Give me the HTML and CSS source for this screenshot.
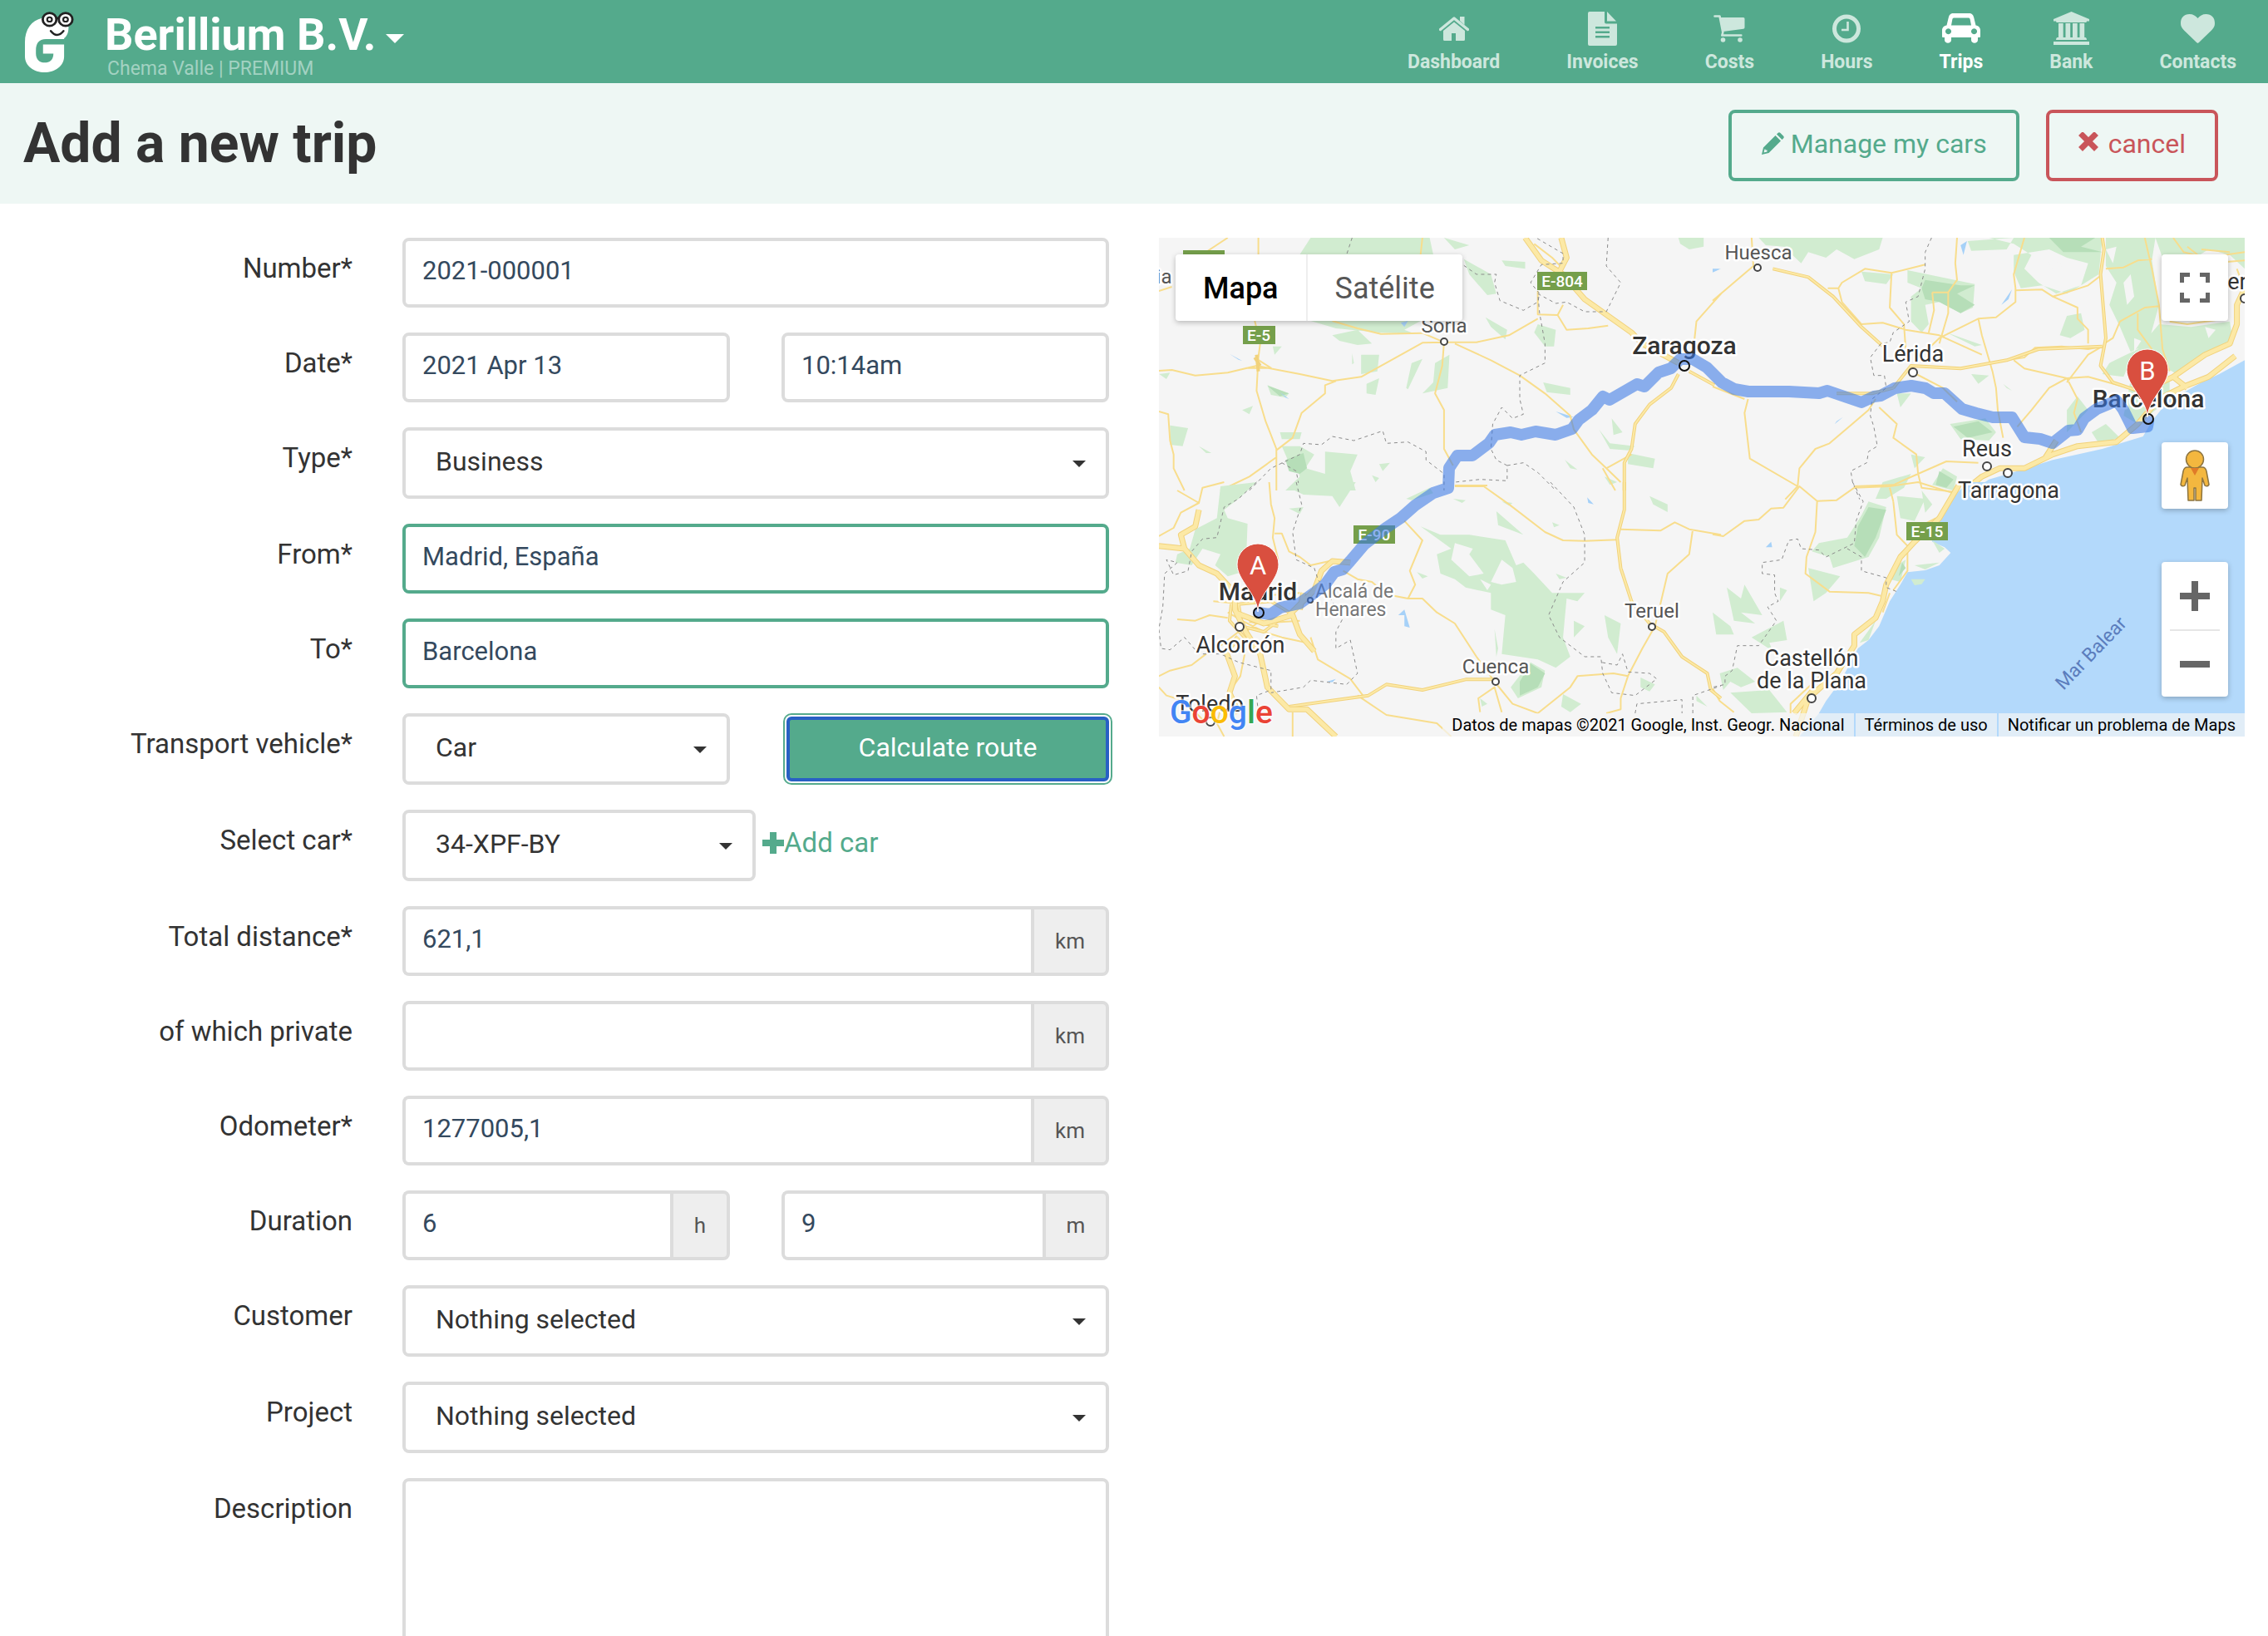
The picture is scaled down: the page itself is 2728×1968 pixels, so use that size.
FILE: index.html
```html
<!DOCTYPE html>
<html lang="en">
<head>
<meta charset="utf-8">
<meta name="viewport" content="width=device-width, initial-scale=1">
<title>Add a new trip</title>
<link rel="stylesheet" href="styles.css">
</head>
<body>
<header class="topbar">
  <a class="logo" href="#" aria-label="Home">
    <svg width="62" height="76" viewBox="28 12 62 76">
      <g transform="scale(.357 .339)">
        <path fill="#fff" d="M142 64C106 72 84 104 84 150V200C84 235 115 257 150 257S216 235 216 200V136C226 128 231 115 231 95V60z"/>
        <path fill="#54aa8c" d="M218 139H155C130 139 121 155 121 180V190C121 212 135 222 150 222 168 222 180 212 180 190H145V158H218z"/>
        <path fill="none" stroke="#222" stroke-width="7" stroke-linecap="round" d="M171 110Q192 138 214 110M188 66q6-4 12 0"/>
        <circle cx="167" cy="69" r="23" fill="#fff" stroke="#222" stroke-width="8"/>
        <circle cx="221" cy="69" r="23" fill="#fff" stroke="#222" stroke-width="8"/>
        <circle cx="167" cy="69" r="8" fill="none" stroke="#222" stroke-width="6"/>
        <circle cx="221" cy="69" r="8" fill="none" stroke="#222" stroke-width="6"/>
      </g>
    </svg>
  </a>
  <div class="account">
    <button class="company" type="button">Berillium B.V.<span class="company-caret"></span></button>
    <span class="user">Chema Valle | PREMIUM</span>
  </div>
  <nav class="mainnav">
    <a class="navlink" href="#"><span class="navicon"><svg width="36" height="29" viewBox="0 0 36 29"><path d="M1.500 15.500 18 2l16.500 13.500" fill="none" stroke="currentColor" stroke-width="3.500" stroke-linecap="round" stroke-linejoin="round"/><path d="M25 0h5.500v10L25 5zM5 17 18 6.500 31 17v10.500q0 1.500-1.500 1.500H20v-9h-5v9H6.500Q5 29 5 27.500z"/></svg></span>Dashboard</a>
    <a class="navlink" href="#"><span class="navicon"><svg width="35" height="41" viewBox="0 0 35 41"><path fill-rule="evenodd" d="M2 0h18v12.500q0 2 2 2h13V39q0 2-2 2H2q-2 0-2-2V2q0-2 2-2zM9 18v2.500h17V18zm0 5.500V26h17v-2.500zM9 29v2.500h17V29zM23 0l11 11.500H23z"/></svg></span>Invoices</a>
    <a class="navlink" href="#"><span class="navicon"><svg width="38" height="33" viewBox="0 0 38 33"><path fill="none" stroke="currentColor" stroke-width="2.600" stroke-linecap="round" stroke-linejoin="round" d="M1.500 1.500h6l3.800 19.500-1 3.500h23"/><path d="M8.500 3H36q1.500 0 1.500 1.500V15q0 1.500-1.500 1.700L11.500 20z"/><circle cx="11.500" cy="30" r="2.800"/><circle cx="32" cy="30" r="2.800"/></svg></span>Costs</a>
    <a class="navlink" href="#"><span class="navicon"><svg width="34" height="35" viewBox="0 0 34 35"><g fill="none" stroke="currentColor"><circle cx="17" cy="17.500" r="14.500" stroke-width="5"/><path d="M18.500 9v10h-7.500" stroke-width="2.600"/></g></svg></span>Hours</a>
    <a class="navlink navlink-active" href="#"><span class="navicon"><svg width="46" height="36" viewBox="0 0 46 36"><path fill-rule="evenodd" d="M14 0h18c4 0 5.500 2 6.200 5l2.300 9.500c3.500.5 5.500 3 5.500 6V28q0 1-1 1h-2v3c0 5-8 5-8 0v-3H11v3c0 5-8 5-8 0v-3H1q-1 0-1-1v-7.500c0-3 2-5.500 5.500-6L7.800 5C8.500 2 10 0 14 0zm0 5.500q-1.300 0-1.600 1.500L11 14.500h24L33.600 7q-.3-1.500-1.600-1.500zM7.500 18.200a3.500 3.500 0 1 0 .01 0zm31 0a3.500 3.500 0 1 0 .01 0z"/></svg></span>Trips</a>
    <a class="navlink" href="#"><span class="navicon"><svg width="43" height="40" viewBox="0 0 43 40"><path d="M21.500 0 43 9v2.500h-3q0 1.500-1.500 1.500h-34Q3 13 3 11.500H0V9zM6 14h5.700v17H6zm8.500 0h5.700v17h-5.700zm8.500 0h5.700v17H23zm8.500 0h5.700v17h-5.700zM4.500 31h34q1.500.5 1.500 3H3q0-2.500 1.500-3zM0 36h43v4H0z"/></svg></span>Bank</a>
    <a class="navlink" href="#"><span class="navicon"><svg width="41" height="35" viewBox="0 0 41 35"><path d="M20.500 35Q19 34 17.500 32.500L4 19.500C1 16.500 0 14 0 11 0 4 4 0 10.500 0 15 0 18 2 20.500 5 23 2 26 0 30.500 0 37 0 41 4 41 11c0 3-1 5.500-4 8.500l-13.500 13Q22 34 20.500 35z"/></svg></span>Contacts</a>
  </nav>
</header>

<section class="pagehead">
  <h1 class="title">Add a new trip</h1>
  <div class="actions">
    <button class="btn btn-green" type="button"><svg width="28" height="28" viewBox="0 0 28 28"><path fill-rule="evenodd" d="M1 27l2-8.500L17.500 4l6.500 6.500L9.500 25zM19 2.500l1.500-1.500q1.500-1.500 3 0l3.500 3.500q1.500 1.500 0 3L25.500 9zM4.500 20.500l-1 4 4-1v-2h-2v-1z"/></svg>Manage my cars</button>
    <button class="btn btn-red" type="button"><svg width="24" height="28" viewBox="0 0 24 28"><path d="M5 4l14 14M19 4L5 18" fill="none" stroke="currentColor" stroke-width="7" stroke-linecap="square"/></svg>cancel</button>
  </div>
</section>

<main class="content">
  <form class="form">
    <div class="row"><label class="label" for="number">Number*</label>
      <input class="input" id="number" type="text" value="2021-000001"></div>
    <div class="row"><label class="label" for="date">Date*</label>
      <div class="pair"><input class="input" id="date" type="text" value="2021 Apr 13"><input class="input" type="text" value="10:14am" aria-label="Time"></div></div>
    <div class="row"><label class="label" for="type">Type*</label>
      <div class="select"><select id="type"><option>Business</option></select></div></div>
    <div class="row"><label class="label" for="from">From*</label>
      <input class="input input-valid" id="from" type="text" value="Madrid, España"></div>
    <div class="row"><label class="label" for="to">To*</label>
      <input class="input input-valid" id="to" type="text" value="Barcelona"></div>
    <div class="row"><label class="label" for="vehicle">Transport vehicle*</label>
      <div class="pair"><div class="select"><select id="vehicle"><option>Car</option></select></div><button class="calc" type="button">Calculate route</button></div></div>
    <div class="row"><label class="label" for="car">Select car*</label>
      <div class="carline"><div class="select"><select id="car"><option>34-XPF-BY</option></select></div><a class="addcar" href="#"><svg width="26" height="26" viewBox="0 0 26 26"><path d="M13 0v26M0 13h26" stroke="currentColor" stroke-width="8"/></svg>Add car</a></div></div>
    <div class="row"><label class="label" for="total">Total distance*</label>
      <div class="group"><input class="input" id="total" type="text" value="621,1"><span class="addon addon-km">km</span></div></div>
    <div class="row"><label class="label" for="private">of which private</label>
      <div class="group"><input class="input" id="private" type="text" value=""><span class="addon addon-km">km</span></div></div>
    <div class="row"><label class="label" for="odometer">Odometer*</label>
      <div class="group"><input class="input" id="odometer" type="text" value="1277005,1"><span class="addon addon-km">km</span></div></div>
    <div class="row"><label class="label" for="hours">Duration</label>
      <div class="pair"><div class="group"><input class="input" id="hours" type="text" value="6"><span class="addon">h</span></div><div class="group"><input class="input" type="text" value="9" aria-label="Minutes"><span class="addon addon-m">m</span></div></div></div>
    <div class="row"><label class="label" for="customer">Customer</label>
      <div class="select"><select id="customer"><option>Nothing selected</option></select></div></div>
    <div class="row"><label class="label" for="project">Project</label>
      <div class="select"><select id="project"><option>Nothing selected</option></select></div></div>
    <div class="row"><label class="label" for="description">Description</label>
      <textarea class="input textarea" id="description"></textarea></div>
  </form>

  <section class="map" aria-label="Route map">
    <svg class="mapcanvas" viewBox="0 0 1306 600" preserveAspectRatio="xMidYMid slice">
      <rect width="1306" height="600" fill="#f5f5f5"/>
      <!-- north-east tile -->
      <g class="tile" transform="translate(666 -6) scale(.42608 .33333)">
        <path class="sea" d="M1502 460 1430 510 1380 540 1325 580 1290 600 1240 680 1215 735 1100 780 960 820 860 860 780 890 745 920 715 962H1504z"/>
        <path class="wood" d="M130 18H480L470 60 400 95 350 60 320 90 270 70 250 110 200 50 150 45zM550 135 740 185 735 270 700 290 640 250 600 260 610 330 590 360 560 320 560 230 590 200 550 180zM640 18H780L850 40 900 80 880 130 920 180 970 220 1040 190 1090 150 1100 18H640zM720 30 850 18 830 60 730 65zM850 80 950 60 1000 90 1060 110 1040 190 1000 220 930 190 870 200 850 140zM1110 18H1250L1240 100 1260 260 1230 400 1180 430 1150 340 1120 260 1140 180 1110 120zM1250 18H1502V130L1460 80 1400 60 1350 100 1270 90zM1260 330 1350 340 1460 320 1470 400 1400 430 1310 510 1270 480 1220 510 1180 460 1160 520 1100 510 1120 470 1200 420zM1000 300 1040 290 1050 350 1010 380 980 370zM670 690 770 670 800 720 780 750 700 745zM520 580 560 580 530 630zM1000 640 1030 590 1060 640 1000 720zM1070 720 1110 690 1150 740 1090 760zM480 900 560 870 540 920 490 960H460zM560 800 600 810 570 850zM650 850 690 880 680 930 620 910zM730 510 780 515 750 545zM820 545 845 570 830 560zM420 140 510 150 490 185 430 175zM660 360 760 405 740 410zM1180 530 1290 520 1290 600 1200 690 1160 660 1170 600z"/>
        <path class="dark" d="M600 170 700 190 740 190 690 220 740 260 700 290 640 250 600 240 590 200zM950 18H1080L1040 50 1100 70 990 70zM680 700 750 680 790 720 720 740zM640 860 680 890 660 920 630 910z"/>
        <path class="land" d="M940 90 980 110 1000 150 960 130zM1160 180 1180 150 1190 230 1170 260zM1110 60 1140 50 1130 110zM1190 380 1210 390 1190 430zM1390 340 1420 350 1400 380z"/>
        <path class="water" d="M815 260 845 205 835 240zM700 45 718 30 708 80zM345 690 368 665 350 680zM0 130 20 130 0 142z"/>
        <path class="road" d="M110 18 115 120 0 245M325 200 355 200 365 180 430 130 505 145 600 115M505 145 500 270 540 330 545 420M355 200 365 250 420 330 480 325 545 350 640 370 760 440M620 215 625 280 610 360M665 215 665 290 640 400M690 18 685 110 690 170 665 215 620 215M880 18 850 150 855 200 855 250 800 305 750 310 640 380 600 430M855 208 930 205 960 230 1000 215 1060 190 1095 155M960 230 1030 270 1030 310 1060 350 1060 400M750 310 760 370 790 500 800 560 805 640 820 740M1110 130 1160 125 1200 100 1240 95M1220 18 1240 130 1260 260 1270 420 1290 500M1105 400 1130 380 1150 320 1220 270 1260 265M1200 290 1200 350 1240 420M1100 410 1060 420 985 410 910 415 880 450 830 460M850 460 880 490 1000 525 1060 520 1160 555M1000 525 1030 600 1020 650 1040 720M1000 525 950 560 900 640 860 700M1000 540 1060 440 1100 410M575 510 650 560 690 610M100 600 90 650 105 815 240 915 205 962M240 915 245 850 290 780 330 760 440 640 460 600M400 915 510 910 580 870 660 825 750 830M580 870 575 800 510 740 520 690 470 630M580 870 590 920 680 935M1340 50 1400 110 1502 100M1300 18 1330 70 1390 90 1502 70M1290 320 1340 330 1450 310M1480 130 1500 200M0 555 90 600M1380 60 1460 70"/>
        <path class="edge mid" d="M170 130 270 160 340 230 420 340 490 420M510 560 560 480 700 490 830 460 920 420 1100 410M1100 18 1105 60 1095 150 1110 380 1095 480 1130 540 1200 570M350 580 450 580 510 560"/>
        <path class="fillroad mid" d="M170 130 270 160 340 230 420 340 490 420M510 560 560 480 700 490 830 460 920 420 1100 410M1100 18 1105 60 1095 150 1110 380 1095 480 1130 540 1200 570M350 580 450 580 510 560"/>
        <path class="edge big" d="M680 962 760 880 810 850 880 850 960 800 1030 770 1140 755 1200 690 1260 600 1330 555 1400 520 1440 480 1475 445M940 810 970 750M1200 580 1300 520 1390 440 1460 400 1480 330 1480 260 1502 200M1300 520 1340 560"/>
        <path class="fillroad big" d="M680 962 760 880 810 850 880 850 960 800 1030 770 1140 755 1200 690 1260 600 1330 555 1400 520 1440 480 1475 445M940 810 970 750M1200 580 1300 520 1390 440 1460 400 1480 330 1480 260 1502 200M1300 520 1340 560"/>
        <path class="border" d="M618 18 600 70 600 130 580 230 545 250 555 320 510 360 500 395 475 400 445 450 455 515 485 515 490 560 450 600 445 660 455 700 465 770 440 790 435 830 390 860 395 900 415 962"/>
      </g>
      <!-- south-east tile -->
      <g class="tile" transform="translate(666 294) scale(.42608 .33333)">
        <path class="sea" d="M720 0 690 40 640 130 610 180 620 215 655 235 672 255 640 300 600 318 550 325 530 370 500 430 470 520 440 570 410 600 390 650 360 720 320 790 300 834 245 918H1504V0z"/>
        <path class="wood" d="M440 70 490 90 470 200 440 270 340 310 330 270 280 250 300 220 380 200 420 120zM270 310 360 340 320 400 285 430zM520 50 600 60 570 140 530 130zM590 30 620 80 600 110zM40 380 80 420 90 370 140 480 80 470 120 510 60 500zM0 470 50 520 60 550 10 550zM110 560 200 500 210 570 160 580 170 610zM20 690 70 670 120 720 80 740 50 720 30 750zM50 760 160 750 210 830 110 834zM520 300 545 280 530 360 500 350zM570 300 640 290 600 315zM560 350 600 350 590 368 570 372zM620 210 655 240 640 255zM460 500 440 570 415 580zM190 380 210 390 190 430z"/>
        <path class="dark" d="M440 90 490 100 460 200 430 270 400 230 410 160zM535 290 545 310 525 340z"/>
        <path class="water" d="M150 235 165 215 168 235z"/>
        <path class="road" d="M0 188 30 195 90 140 130 135 165 95 200 92 245 15 295 68 290 180 265 270 262 330 330 395 440 400 475 410M295 68 350 65 400 20 500 15 580 0 680 40M510 70 500 20M510 70 520 190 550 230M550 250 550 320 510 390M500 400 480 470M0 745 20 790 60 830M600 150 630 130M220 834 220 800 320 680"/>
        <path class="edge big" d="M700 0 640 130 570 215 530 270 490 370 480 430 460 490 400 550 400 590 350 690 270 780 235 918M290 740 230 834"/>
        <path class="fillroad big" d="M700 0 640 130 570 215 530 270 490 370 480 430 460 490 400 550 400 590 350 690 270 780 235 918M290 740 230 834"/>
        <path class="border" d="M395 0 425 70 405 140 400 220 320 270 300 245 250 240 240 205 215 210 195 280 140 290 140 330 175 335 175 400 185 430 155 450 180 500 130 590 70 590 55 680 35 700 35 730 0 740M380 240 420 270 420 320 490 345 490 380 520 395"/>
      </g>
      <!-- north-west tile -->
      <g class="tile" transform="translate(-4 -6) scale(.43367 .33333)">
        <path class="wood" d="M430 18H760L770 78H400zM430 318H735L690 350 720 365 620 360 500 345zM490 370 560 350 600 400 560 405 510 390zM570 440 620 440 615 500 570 510zM585 545 620 525 610 585 585 580zM710 470 740 455 700 565 695 560zM775 470 815 440 810 560 740 580 770 540zM800 18 870 45 830 60zM1450 18H1520L1520 50 1480 60 1455 40zM855 95 930 150 945 220 920 225 870 150zM960 100 1025 105 1025 130 970 120zM915 305 975 350 970 385 930 340zM1060 330 1110 350 1105 410 1080 410 1050 360zM1075 540 1150 560 1150 585 1085 575zM40 695 90 705 75 770 40 765zM120 770 155 795 140 795zM240 640 270 625 260 655zM310 550 370 580 360 595 320 585zM470 790 560 800 540 860 555 930H360L400 880 390 840 470 870zM345 720 405 720 400 745 350 745zM350 770 400 770 440 800 410 860 370 830zM620 835 650 830 630 860zM600 875 620 885 610 900zM1265 670 1295 720 1270 730zM1230 710 1260 760 1330 770 1310 785 1260 780zM1310 795 1385 815 1380 850 1310 835zM1135 820 1170 855 1150 850zM1245 880 1280 900 1260 910zM325 410 350 410 330 440zM10 510 40 505 30 528zM545 435 550 470 545 475z"/>
        <path class="dark" d="M360 820 410 795 420 850 400 870 370 860zM310 552 370 580 345 590z"/>
        <path class="water" d="M205 437 240 462 230 458zM680 325 700 318 690 340zM1110 645 1160 665 1140 668zM345 575 370 600 360 595zM1545 135 1568 130 1545 143z"/>
        <path class="road" d="M9 210 45 195M200 18 130 78M285 18V78M740 18 735 78M275 318 290 400 285 450 280 570 305 680 335 780 335 930M9 498 45 495 110 515 200 505 280 480 400 510 490 535 570 520 740 397 800 395 890 395 980 370 1060 310M250 488H320L280 455M490 318 560 345 625 365 740 362 800 395M830 400 930 460 1010 515 1080 580 1150 660 1160 710 1210 800 1250 850 1290 900M800 395 795 480 775 580 800 640 800 780 825 840M9 645 35 655 40 750 50 800 50 850 80 930M500 535 470 550 470 580 405 650 380 740 335 785M335 810 260 880 180 930M1060 210 1060 295 1115 297 1140 350 1200 345 1255 335M1115 297 1130 260M1568 220 1500 320 1490 440M1050 40 1100 90 1130 130M1320 800 1250 850M1240 850 1275 930M830 912H920"/>
        <path class="edge mid" d="M1450 510 1430 560 1370 620 1330 690 1320 780 1300 830 1300 930M1480 500 1550 550M280 440 285 500M275 450 290 480"/>
        <path class="fillroad mid" d="M1450 510 1430 560 1370 620 1330 690 1320 780 1300 830 1300 930M1480 500 1550 550"/>
        <path class="edge big" d="M1025 18 1070 100 1130 150 1190 240 1320 360 1350 400 1450 470M1125 18 1140 90 1120 140"/>
        <path class="fillroad big" d="M1025 18 1070 100 1130 150 1190 240 1320 360 1350 400 1450 470M1125 18 1140 90 1120 140"/>
        <path class="border" d="M545 18 530 78M855 118 890 150 945 150 940 180 955 245 1020 280 1060 250 1065 220 1040 180 1070 115 1130 110 1130 75 1055 18M1255 18 1250 120 1290 180 1250 285 1190 285 1140 250 1110 255 1060 220 1065 290 1080 400 1080 470 1010 515 1010 600 1020 655 990 670 960 630 935 690 930 780 945 820 975 840 975 895 900 890 830 900M975 840 1020 830 1060 865 1110 930M260 930 320 850 400 800 410 760 460 765 490 735 550 750 630 715 640 760 700 755 750 790 750 820 800 870 800 930M350 830 390 860 400 930"/>
      </g>
      <!-- south-west tile -->
      <g class="tile" transform="translate(-4 294) scale(.43367 .33333)">
        <path class="wood" d="M180 15 280 0 230 60 190 100 200 130 255 150 250 320 200 340 165 300 180 260 130 240 100 300 55 290 60 260 95 240 110 170 170 130zM370 20 400 0H555L510 90 490 50 410 45zM370 95 410 90 400 115zM695 60 760 20 770 40 710 65zM825 60 860 65 850 75zM945 105 1020 190 950 155zM735 160 790 190 870 190 970 210 1000 300 1020 290 1050 330 1100 400 1190 400 1170 430 1140 420 1130 560 1150 630 1110 670 1060 640 960 620 970 480 930 460 930 400 860 380 830 350 790 330 780 260 820 240zM725 325 755 340 740 348zM1000 715 1040 650 1080 680 1070 740 1005 780 985 740zM1245 480 1290 510 1280 620 1255 560zM1160 500 1190 520 1160 560zM1370 50 1420 80 1420 108 1380 80zM1345 705 1385 730 1370 755 1345 740zM1130 765 1180 800 1150 830 1125 810zM900 780 920 800 905 810zM940 530 950 600 945 630zM960 70 990 75 980 85zM1100 145 1120 155 1105 163zM1500 770 1530 810 1500 790zM1530 510 1535 560zM1110 330 1140 345 1120 350z"/>
        <path class="land" d="M830 220 880 240 870 260 910 330 870 340 820 280zM960 280 990 310 1000 360 960 370 930 360zM900 350 930 370 920 390z"/>
        <path class="dark" d="M1040 655 1080 690 1060 740 1010 770 1010 720z"/>
        <path class="water" d="M673 480 690 460 705 525 690 520 690 480zM1197 55 1215 80 1200 75zM475 720 500 710 490 722z"/>
        <path class="road" d="M9 195 50 165 70 110 120 75 130 20 190 0M120 75 60 30M315 0 320 80 330 130 325 200 340 280M330 185 350 185 370 250 400 270 430 300 500 280M690 140 740 210 705 320 720 370 700 420 640 405 600 360 560 350 520 320M700 420 740 420 780 470 830 510 890 630 940 720M830 15H910L980 80 1080 180 1130 210 1190 212 1280 208M1290 170 1400 175 1440 145 1480 170 1568 190M1490 170 1480 260 1420 330 1400 440 1385 520 1350 600 1310 700 1290 780 1290 820 1250 834M60 495 110 500 150 480 200 490M160 430 250 440 300 410 400 400M9 700 40 680 100 660 140 620 180 590 230 540M9 740 30 770 80 790 140 870M430 560 450 640 540 710 575 770M940 720 990 800 1060 834 1150 740 1170 700 1270 690 1310 700M900 830 895 780 940 740 960 830M1250 834 1290 820M560 770 640 840 780 870 820 918M250 600 235 700 180 800M380 830 380 918M200 470 240 500 300 540 350 560 420 580M180 820 170 870 190 918M250 540 280 510 400 500"/>
        <path class="edge mid" d="M940 712 860 712 740 750 640 730 590 770 480 790 370 810M1300 0 1300 100 1280 200 1290 310 1320 430 1370 510 1410 540 1460 630 1530 690 1540 750 1568 780M210 440 205 500 260 580M350 490 300 540 240 520 230 440 320 430 370 470M260 500 340 520"/>
        <path class="fillroad mid" d="M940 712 860 712 740 750 640 730 590 770 480 790 370 810M1300 0 1300 100 1280 200 1290 310 1320 430 1370 510 1410 540 1460 630 1530 690 1540 750 1568 780M210 440 205 500 260 580M350 490 300 540 240 520 230 440 320 430 370 470M260 500 340 520"/>
        <path class="edge big" d="M9 230 80 240 70 190 110 160 120 100M80 240 120 300 170 330 220 400 220 460 250 540 290 620 310 740 370 820 420 820 500 918M230 560 195 610 220 700 205 760 230 834M220 470 300 510 380 480 400 550 440 610M370 480 440 390 460 320 490 285 540 290M400 460 410 400"/>
        <path class="fillroad big" d="M9 230 80 240 70 190 110 160 120 100M80 240 120 300 170 330 220 400 220 460 250 540 290 620 310 740 370 820 420 820 500 918M230 560 195 610 220 700 205 760 230 834M220 470 300 510 380 480 400 550 440 610M370 480 440 390 460 320 490 285 540 290M400 460 410 400"/>
        <path class="border" d="M280 0 230 60 190 90 170 200 130 205 100 250 90 320 50 335 30 280 60 290 25 330 20 450 9 530 15 600 40 605 80 560 120 620 180 620 230 650 320 680 320 750 280 770 285 834M390 0 405 80 380 180 390 280 440 310 450 350 520 490 500 540 500 600 540 570 560 690 530 730 430 715 410 740 320 760M1095 0 1160 90 1190 190 1190 290 1130 360 1090 480 1120 560 1190 630 1235 630 1240 690 1265 760 1330 770 1390 710 1370 690 1310 685 1295 620 1280 660 1235 650M1330 834 1335 800 1460 785 1460 834M1490 834 1490 770 1568 735"/>
      </g>
      <g class="markers">
        <circle cx="720" cy="36" r="4"/><circle cx="343" cy="125" r="4"/><circle cx="907" cy="162" r="5"/><circle cx="996" cy="275" r="5"/><circle cx="1021" cy="283" r="5"/><circle cx="97" cy="468" r="5"/><circle cx="182" cy="436" r="3"/><circle cx="405" cy="534" r="4"/><circle cx="593" cy="468" r="4"/><circle cx="785" cy="554" r="5"/><circle cx="62" cy="582" r="5"/><circle cx="1306" cy="73" r="5"/>
      </g>
      <g class="shields">
        <rect x="29" y="15" width="50" height="22"/><rect x="101" y="106" width="39" height="22"/><rect x="455" y="41" width="60" height="22"/><rect x="234" y="346" width="50" height="22"/><rect x="899" y="342" width="50" height="22"/>
        <text x="54" y="33">E-80</text><text x="120" y="124">E-5</text><text x="485" y="59">E-804</text><text x="259" y="364">E-90</text><text x="924" y="360">E-15</text>
      </g>
      <g class="places">
        <text class="city" x="632" y="140">Zaragoza</text>
        <text class="city" x="119" y="436">Madrid</text>
        <text class="city" x="1190" y="204">Barcelona</text>
        <text class="town" x="98" y="499">Alcorcón</text>
        <text class="town" x="907" y="149">Lérida</text>
        <text class="town" x="996" y="263">Reus</text>
        <text class="town" x="1022" y="313">Tarragona</text>
        <text class="town" x="785" y="515">Castellón</text>
        <text class="town" x="785" y="542">de la Plana</text>
        <text class="small" x="721" y="26">Huesca</text>
        <text class="small" x="343" y="114">Soria</text>
        <text class="small" x="593" y="457">Teruel</text>
        <text class="small" x="405" y="524">Cuenca</text>
        <text class="town" x="61" y="570">Toledo</text>
        <text class="small" x="6" y="55">ia</text>
        <text class="town" x="1297" y="62">er</text>
        <text class="minor" x="188" y="433">Alcalá de</text>
        <text class="minor" x="188" y="455">Henares</text>
        <text class="seaname" transform="translate(1088 545) rotate(-46)">Mar Balear</text>
      </g>
      <path class="route" d="M120 451 134 453 146 445 169 440 187 427 200 417 211 402 221 399 230 389 247 369 273 349 291 337 308 322 330 307 348 301 349 277 359 262 377 262 397 247 404 237 423 234 436 237 453 233 477 237 497 230 505 219 521 207 534 191 542 195 575 176 584 179 601 162 616 157 627 146 642 146 659 156 677 174 692 182 709 185 758 185 794 187 804 184 845 198 860 191 868 190 885 181 905 178 922 181 932 187 945 187 966 206 983 211 1003 216 1026 216 1041 240 1060 242 1075 247 1094 232 1105 231 1113 217 1128 206 1152 196 1160 207 1171 229 1189 227 1190 221"/>
      <g class="capitals"><circle cx="632" cy="154" r="6"/><circle cx="1190" cy="218" r="6"/><circle cx="120" cy="451" r="6"/></g>
      <g class="pins">
        <path d="M119 450C118 428 94 412 94 393A25 25 0 0 1 144 393C144 412 120 428 119 450z"/>
        <path d="M1189 216C1188 194 1164 178 1164 159A25 25 0 0 1 1214 159C1214 178 1190 194 1189 216z"/>
        <text x="119" y="405">A</text><text x="1189" y="171">B</text>
      </g>
      <text class="brand" x="13" y="584"><tspan fill="#4285f4">G</tspan><tspan fill="#ea4335">o</tspan><tspan fill="#fbbc05">o</tspan><tspan fill="#4285f4">g</tspan><tspan fill="#34a853">l</tspan><tspan fill="#ea4335">e</tspan></text>
    </svg>
    <div class="maptypes"><button class="maptype maptype-on" type="button">Mapa</button><button class="maptype" type="button">Satélite</button></div>
    <div class="mapside">
      <button class="mapbtn" type="button" aria-label="Full screen"><svg width="36" height="36" viewBox="0 0 36 36"><path fill="none" stroke="#666" stroke-width="5" d="M2.500 12V2.500H12M24 2.500h9.500V12M33.500 24v9.500H24M12 33.500H2.500V24"/></svg></button>
      <button class="mapbtn pegman" type="button" aria-label="Street view"><svg width="36" height="62" viewBox="0 0 36 62"><g fill="#f3b73f" stroke="#8c7440" stroke-width="1.500" stroke-linejoin="round"><path d="M9 21h18q4 0 5 5l3 16q-2 3-5 1l-3-9-1 27H19V46h-2v15H10L9 34 6 43q-3 2-5-1L4 26q1-5 5-5z"/><circle cx="18" cy="11.500" r="10.500"/></g><path d="M13 22h10l-5 9z" fill="#e07a28"/></svg></button>
      <div class="zoom">
        <button class="zoombtn" type="button" aria-label="Zoom in"><svg width="36" height="36" viewBox="0 0 36 36"><path d="M18 0v36M0 18h36" stroke="#666" stroke-width="8"/></svg></button>
        <button class="zoombtn" type="button" aria-label="Zoom out"><svg width="36" height="8" viewBox="0 0 36 8"><path d="M0 4h36" stroke="#666" stroke-width="8"/></svg></button>
      </div>
    </div>
    <div class="credits"><span>Datos de mapas ©2021 Google, Inst. Geogr. Nacional</span><a href="#">Términos de uso</a><a href="#">Notificar un problema de Maps</a></div>
  </section>
</main>
</body>
</html>
```
FILE: styles.css
```css
* { box-sizing: border-box; }
body { margin: 0; background: #fff; color: #333; font: 32px/40px Roboto, "Liberation Sans", sans-serif; }
button, input, select, textarea { font: inherit; color: inherit; margin: 0; }
button { cursor: pointer; }
a { text-decoration: none; color: inherit; }
svg { display: block; flex: none; }

.topbar { display: flex; height: 100px; padding: 0 38px 0 28px; background: #54aa8c; color: #fff; }
.logo { padding-top: 12px; width: 98px; }
.account { display: flex; flex-direction: column; align-items: flex-start; padding-top: 12px; }
.company { display: flex; align-items: center; gap: 12px; padding: 0; border: 0; background: none; font-size: 54px; line-height: 60px; font-weight: 700; color: #fff; }
.company-caret { border: 11px solid transparent; border-top-color: #fff; border-bottom: 0; margin-top: 8px; }
.user { padding-left: 3px; font-size: 23px; line-height: 22px; color: #a3d2c2; }
.mainnav { display: flex; gap: 80px; margin-left: auto; }
.navlink { display: flex; flex-direction: column; align-items: center; padding-top: 12px; font-size: 23px; line-height: 38px; font-weight: 700; color: #cde7dd; }
.navlink svg { fill: currentColor; }
.navlink-active { color: #fff; }
.navicon { display: flex; align-items: center; height: 44px; }

.pagehead { display: flex; justify-content: space-between; align-items: center; min-height: 145px; padding: 0 60px 0 28px; background: #eef7f4; }
.title { margin: 0; font-size: 66px; line-height: 80px; font-weight: 700; }
.actions { display: flex; gap: 32px; margin-top: 4px; }
.btn { display: flex; align-items: center; gap: 8px; height: 86px; padding: 0 35px 4px; border: 4px solid; border-radius: 8px; background: transparent; }
.btn svg { fill: currentColor; }
.btn-green { color: #54aa8c; }
.btn-red { color: #c9555a; gap: 12px; }

.content { display: grid; grid-template-columns: 1fr 1fr; gap: 60px; align-items: start; padding: 41px 28px 0; }
.form { display: flex; flex-direction: column; gap: 30px; }
.row { display: grid; grid-template-columns: 396fr 850fr; gap: 60px; }
.label { padding-top: 17px; text-align: right; font-size: 33px; }
.pair { display: grid; grid-template-columns: 1fr 1fr; gap: 62px; }
.input { width: 100%; min-width: 0; height: 84px; padding: 0 20px 6px; border: 4px solid #dcdcdc; border-radius: 8px; background: #fff; color: #34495e; font-size: 31px; outline: 0; }
.input-valid { border-color: #54aa8c; }
.textarea { display: block; height: 260px; resize: none; }
.select { position: relative; }
.select select { display: block; width: 100%; height: 86px; padding: 0 60px 4px 36px; border: 4px solid #dcdcdc; border-radius: 8px; background: #fff; appearance: none; }
.select::after { content: ""; position: absolute; right: 28px; top: 40px; border: 8px solid transparent; border-top-color: #333; border-bottom: 0; pointer-events: none; }
.calc { height: 78px; margin: 4px 0 4px 6px; padding: 0 0 4px; border: 4px solid #2860c4; border-radius: 6px; background: #54aa8c; color: #fff; box-shadow: 0 0 0 2px #fff, 0 0 0 4px #54aa8c; }
.carline { display: flex; align-items: center; gap: 8px; }
.carline .select { width: 50%; }
.addcar { display: flex; align-items: center; padding-bottom: 6px; color: #54aa8c; font-size: 33px; }
.group { display: flex; }
.group .input { flex: 1; border-right: 0; border-radius: 8px 0 0 8px; }
.addon { display: flex; align-items: center; justify-content: center; min-width: 72px; padding: 0 22px; border: 4px solid #dcdcdc; border-radius: 0 8px 8px 0; background: #eee; color: #555; font-size: 26px; }
.addon-m { min-width: 80px; }
.addon-km { min-width: 94px; }

.map { position: relative; height: 600px; overflow: hidden; font-family: Roboto, sans-serif; }
.mapcanvas { width: 100%; height: 100%; }
.tile path { vector-effect: non-scaling-stroke; fill: none; stroke-linejoin: round; }
.tile .sea { fill: #b3d9fb; }
.tile .wood { fill: #d1ecd0; }
.tile .dark { fill: #b6deb8; }
.tile .water { fill: #a6d1f8; }
.tile .land { fill: #f5f5f5; }
.tile .road { stroke: #f8dd8c; stroke-width: 2px; }
.tile .edge { stroke: #f1d27c; }
.tile .fillroad { stroke: #fce9a6; }
.tile .edge.mid { stroke-width: 4px; }
.tile .fillroad.mid { stroke-width: 2px; }
.tile .edge.big { stroke-width: 7px; }
.tile .fillroad.big { stroke-width: 5px; }
.tile .border { stroke: #8b8b8b; stroke-width: 1px; stroke-dasharray: 4 4; }
.markers circle { fill: #fff; stroke: #444; stroke-width: 2px; }
.capitals circle { fill: none; stroke: #111; stroke-width: 2px; }
.shields rect { fill: #759f4b; }
.shields text { fill: #fff; font-size: 19px; font-weight: 500; text-anchor: middle; }
.places text { text-anchor: middle; paint-order: stroke; stroke: #fff; stroke-width: 5px; stroke-linejoin: round; fill: #333; }
.places .city { font-size: 30px; font-weight: 500; }
.places .town { font-size: 27px; }
.places .small { font-size: 24px; fill: #555; }
.places .minor { font-size: 23px; fill: #777; text-anchor: start; }
.places .seaname { font-size: 23px; fill: #5b7dbd; stroke: none; text-anchor: start; }
.route { fill: none; stroke: #3a78e6; stroke-opacity: .58; stroke-width: 14px; stroke-linejoin: round; stroke-linecap: round; }
.pins path { fill: #d94f3f; stroke: #fff; stroke-width: 1px; }
.pins text { fill: #fff; font-size: 31px; text-anchor: middle; }
.brand { font-size: 39px; font-weight: 500; paint-order: stroke; stroke: #fff; stroke-width: 3px; stroke-opacity: .6; }
.maptypes { position: absolute; left: 20px; top: 20px; display: flex; border-radius: 4px; background: #fff; box-shadow: 0 2px 6px rgba(0, 0, 0, .25); }
.maptype { height: 80px; padding: 2px 33px 0; border: 0; background: none; font-size: 36px; color: #565656; }
.maptype-on { font-weight: 500; color: #000; border-right: 2px solid #eee; }
.mapside { position: absolute; right: 20px; top: 20px; width: 80px; display: flex; flex-direction: column; }
.mapbtn { display: flex; align-items: center; justify-content: center; height: 80px; padding: 0; border: 0; border-radius: 4px; background: #fff; box-shadow: 0 2px 6px rgba(0, 0, 0, .25); }
.pegman { margin: 146px 0 64px; }
.zoom { display: flex; flex-direction: column; padding: 0 10px; border-radius: 4px; background: #fff; box-shadow: 0 2px 6px rgba(0, 0, 0, .25); }
.zoombtn { display: flex; align-items: center; justify-content: center; height: 81px; padding: 0; border: 0; background: none; }
.zoombtn + .zoombtn { border-top: 2px solid #e6e6e6; }
.credits { position: absolute; right: 0; bottom: 0; display: flex; background: rgba(245, 245, 245, .7); font-size: 20px; line-height: 28px; color: #000; }
.credits > * { padding: 0 11px; }
.credits a { border-left: 2px solid #b3d9fb; }
```
